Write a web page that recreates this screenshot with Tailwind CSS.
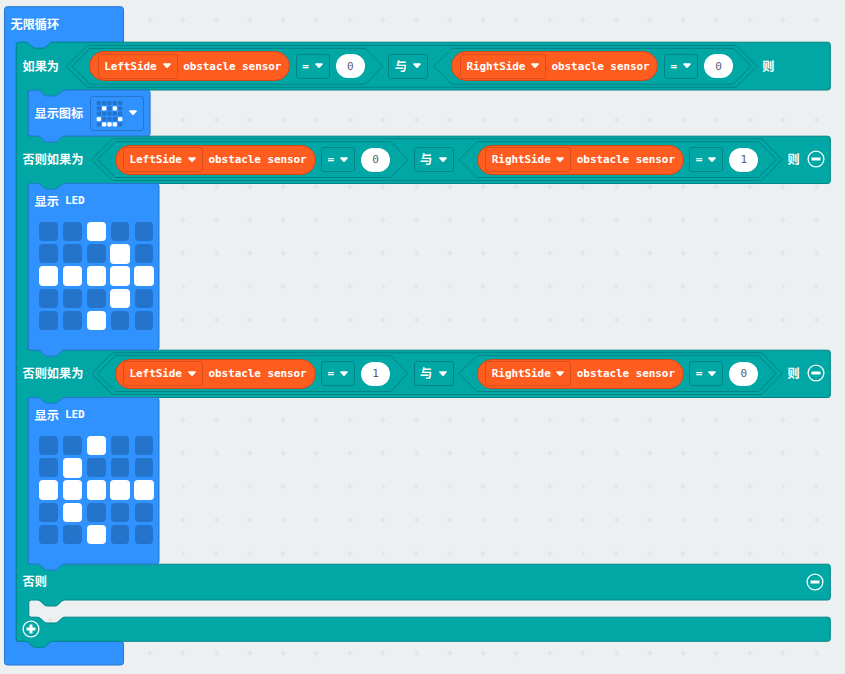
<!DOCTYPE html>
<html lang="zh-CN">
<head>
<meta charset="utf-8">
<title>Blocks</title>
<script src="https://cdn.jsdelivr.net/npm/@tailwindcss/browser@4"></script>
</head>
<body class="bg-[#ecf0f1] overflow-hidden">
<main class="relative w-[845px] h-[674px] overflow-hidden font-['DejaVu_Sans_Mono','Noto_Sans_CJK_SC',monospace] text-[11px] tracking-[-.08px] font-bold text-white">
  <svg class="absolute inset-0" width="845" height="674" viewBox="0.2 0 845 674" fill="none">
    <defs>
      <pattern id="grid" x="0" y="3.33" width="33.333" height="33.333" patternUnits="userSpaceOnUse">
        <path d="M14.200 16.670h5M16.670 14.200v5" stroke="#dce0e1" stroke-width="1.200"/>
      </pattern>
      <g id="hexes" stroke="#008486" stroke-width="1">
        <path d="M87.5 45.5H736.5L757 66.3L736.5 87.2H87.5L66.3 66.3Z"/>
        <path d="M90.3 48.4H365.7L382.8 66.3L365.7 84.2H90.3L72.3 66.3Z"/>
        <path d="M451.8 48.4H733.5L751 66.3L733.5 84.2H451.8L434 66.3Z"/>
      </g>
    </defs>
    <rect width="846" height="674" fill="url(#grid)"/>
    <!-- forever loop -->
    <path d="M7.5 6.7H121Q123.7 6.7 123.7 9.5V42.500H60V49H16.5V641.3H121Q123.7 641.3 123.7 643.800V662.5Q123.7 665 121 665H7.5Q4.7 665 4.7 662.5V9.5Q4.7 6.7 7.5 6.7Z" fill="#2f92ff" stroke="#2676cc"/>
    <!-- if / else if / else -->
    <path d="M19 42.2H25.500Q27.500 42.200 29 43.700L32 46.700Q33.500 48.200 35.500 48.200H43Q45 48.200 46.500 46.700L49.500 43.700Q51 42.200 53 42.200H828Q830.500 42.200 830.500 44.700V87.500Q830.500 90 828 90H28.500V136.200H828Q830.500 136.200 830.500 138.700V181Q830.500 183.500 828 183.500H28.500V350.200H828Q830.500 350.200 830.500 352.700V395Q830.500 397.500 828 397.500H28.500V564.200H828Q830.500 564.200 830.500 566.700V597.500Q830.500 600 828 600H65Q63 600 61.500 601.500L58.500 604.500Q57 606 55 606H47.500Q45.500 606 44 604.500L41 601.500Q39.500 600 37.500 600H31.500Q29 600 29 602.500V614.700Q29 617.200 31.500 617.200H37.500Q39.500 617.200 41 618.700L44 621.500Q45.500 623 47.500 623H55Q57 623 58.500 621.500L61.500 618.700Q63 617.200 65 617.200H828Q830.500 617.200 830.500 619.700V638.800Q830.500 641.300 828 641.300H53Q51 641.300 49.500 642.800L46.500 645.800Q45 647.300 43 647.300H35.500Q33.500 647.300 32 645.800L29 642.800Q27.500 641.300 25.500 641.300H19Q16.500 641.300 16.500 638.800V44.700Q16.500 42.200 19 42.200Z" fill="#00a7a5" stroke="#008486"/>
    <!-- wall of the branch behind each statement -->
    <path d="M28 89H70V100H28ZM28 182.500H70V193H28ZM28 396.500H70V407H28Z" fill="#00a7a5"/>
    <!-- statements inside the branches -->
    <g fill="#2f92ff" stroke="#2676cc">
      <path d="M31 90.200H37.500Q39.500 90.200 41 91.700L44 94.700Q45.500 96 47.500 96H55Q57 96 58.500 94.700L61.500 91.700Q63 90.200 65 90.200H148Q150.300 90.200 150.300 92.500V133.500Q150.300 136 148 136H65Q63 136 61.500 137.500L58.500 140.500Q57 142 55 142H47.500Q45.500 142 44 140.500L41 137.500Q39.500 136 37.500 136H31Q28.500 136 28.500 133.500V92.500Q28.500 90.200 31 90.200Z"/>
      <path id="ledblock" d="M31 183.500H37.500Q39.500 183.500 41 185L44 187.700Q45.500 189.200 47.500 189.200H55Q57 189.200 58.500 187.700L61.500 185Q63 183.500 65 183.500H156.700Q159.200 183.500 159.200 186V347.500Q159.200 350 156.700 350H65Q63 350 61.500 351.500L58.500 354.500Q57 356 55 356H47.500Q45.500 356 44 354.500L41 351.500Q39.500 350 37.500 350H31Q28.500 350 28.500 347.500V186Q28.500 183.500 31 183.500Z"/>
      <use href="#ledblock" y="214"/>
    </g>
    <use href="#hexes"/>
    <use href="#hexes" x="25.300" y="93.300"/>
    <use href="#hexes" x="25.300" y="307.300"/>
  </svg>

  <div id="stack" class="relative flex flex-col"></div>
</main>

<script>
const caret = '<svg width="8" height="6" viewBox="0 0 8 6" class="shrink-0" fill="#fff"><path d="M1 .3H7Q8.200 .3 7.600 1.500L4.700 4.700Q4 5.300 3.300 4.700L.4 1.500Q-.2 .3 1 .3Z"/></svg>';
const zh = (t) => `<span class="text-[12.2px] tracking-normal leading-none font-['Noto_Sans_CJK_SC',sans-serif] whitespace-nowrap">${t}</span>`;
const field = (t, cls, stroke) => `<span class="h-[25px] shrink-0 box-border border rounded-[3px] flex items-center justify-between pl-[5.500px] pr-[6px] ${stroke} ${cls}">${t}${caret}</span>`;
const sensor = (name, w, fw) => `<span class="h-[30px] shrink-0 rounded-full border border-[#cc4a18] bg-[#ff5c1f] flex items-center pl-[7.500px] whitespace-nowrap ${w}">${field(`<span class="pt-px">${name}</span>`, fw, 'border-[#d94e1a]')}<span class="pl-[5.500px] pt-px">obstacle sensor</span></span>`;
const num = (n) => `<span class="w-[29px] h-6 ml-[6px] shrink-0 rounded-full bg-white text-[#575e75] font-normal flex items-center justify-center pt-px">${n}</span>`;
const eq = field('<span class="pt-px">=</span>', 'w-[34px] ml-[5.500px]', 'border-[#008486]');
const circle = (plus) => `<svg width="18" height="18" viewBox="0 0 18 18" fill="none" stroke="#fff" class="shrink-0"><circle cx="9" cy="9" r="7.900" stroke-width="1.300"/><path d="M4.500 9H13.500${plus ? 'M9 4.500V13.500' : ''}" stroke-width="3"/></svg>`;

const condition = (label, labelW, a, b, h, minus) => `
  <div class="flex items-center pl-[22.500px] ${h}">
    <span class="shrink-0 flex ${labelW}">${zh(label)}</span>
    ${sensor('LeftSide', 'w-[201px]', 'w-[80px]')}${eq}${num(a)}
    <span class="shrink-0 flex ml-[23.500px]">${field(zh('与'), 'w-[40px]', 'border-[#008486]')}</span>
    <span class="shrink-0 w-[23.300px]"></span>
    ${sensor('RightSide', 'w-[207px]', 'w-[86px]')}${eq}${num(b)}
    <span class="ml-[29.200px] flex">${zh('则')}</span>
    ${minus ? `<span class="ml-[7px] pb-[.5px] flex">${circle(false)}</span>` : ''}
  </div>`;

const leds = (bits) => `
  <div class="h-[167px] pl-[34.500px] pt-[12px]">
    <div class="flex items-center h-3 gap-[6px]">${zh('显示')}<span class="pt-px">LED</span></div>
    <div class="mt-[14.700px] ml-[4px] w-[115.500px] grid grid-cols-5 gap-x-[3.800px] gap-y-[2.200px]">
      ${[...bits].map(c => c === '1'
        ? '<i class="w-5 h-5 p-[.3px]"><i class="block w-full h-full rounded-[4px] bg-white"></i></i>'
        : '<i class="w-5 h-5 p-[.6px]"><i class="block w-full h-full rounded-[4px] bg-[#2574cb]"></i></i>').join('')}
    </div>
  </div>`;

const face = '0000001010000001000101110';
const faceIcon = `<svg width="27" height="27" viewBox="0 0 27 27">${[...face].map((c, i) =>
  `<rect x="${(i % 5) * 5.330 + .7}" y="${Math.floor(i / 5) * 5.330 + .9}" width="4.300" height="4.300" rx="1.200" fill="${c === '1' ? '#fff' : '#2574cb'}"/>`).join('')}</svg>`;

document.getElementById('stack').innerHTML = `
  <div class="h-[42px] flex items-center pl-[10.500px] pt-[6px]">${zh('无限循环')}</div>
  ${condition('如果为', 'w-[66.700px]', 0, 0, 'h-[48px] pt-[.5px]', false)}
  <div class="h-[46px] flex items-center pl-[34.500px]">${zh('显示图标')}
    <span class="ml-[7px] w-[54px] h-[35px] border border-[#2676cc] rounded-[3px] flex items-center justify-between pl-[5px] pr-[6px]">${faceIcon}${caret}</span>
  </div>
  ${condition('否则如果为', 'w-[92px]', 0, 1, 'h-[47px]', true)}
  ${leds('0010000010111110001000100')}
  ${condition('否则如果为', 'w-[92px]', 1, 0, 'h-[47px]', true)}
  ${leds('0010001000111110100000100')}
  <div class="h-[36px] flex items-center justify-between pl-[22.500px] pr-[21px] pb-px">${zh('否则')}${circle(false)}</div>
  <div class="h-[17px]"></div>
  <div class="h-[24px] flex items-center pl-[22.300px]">${circle(true)}</div>`;
</script>
</body>
</html>
